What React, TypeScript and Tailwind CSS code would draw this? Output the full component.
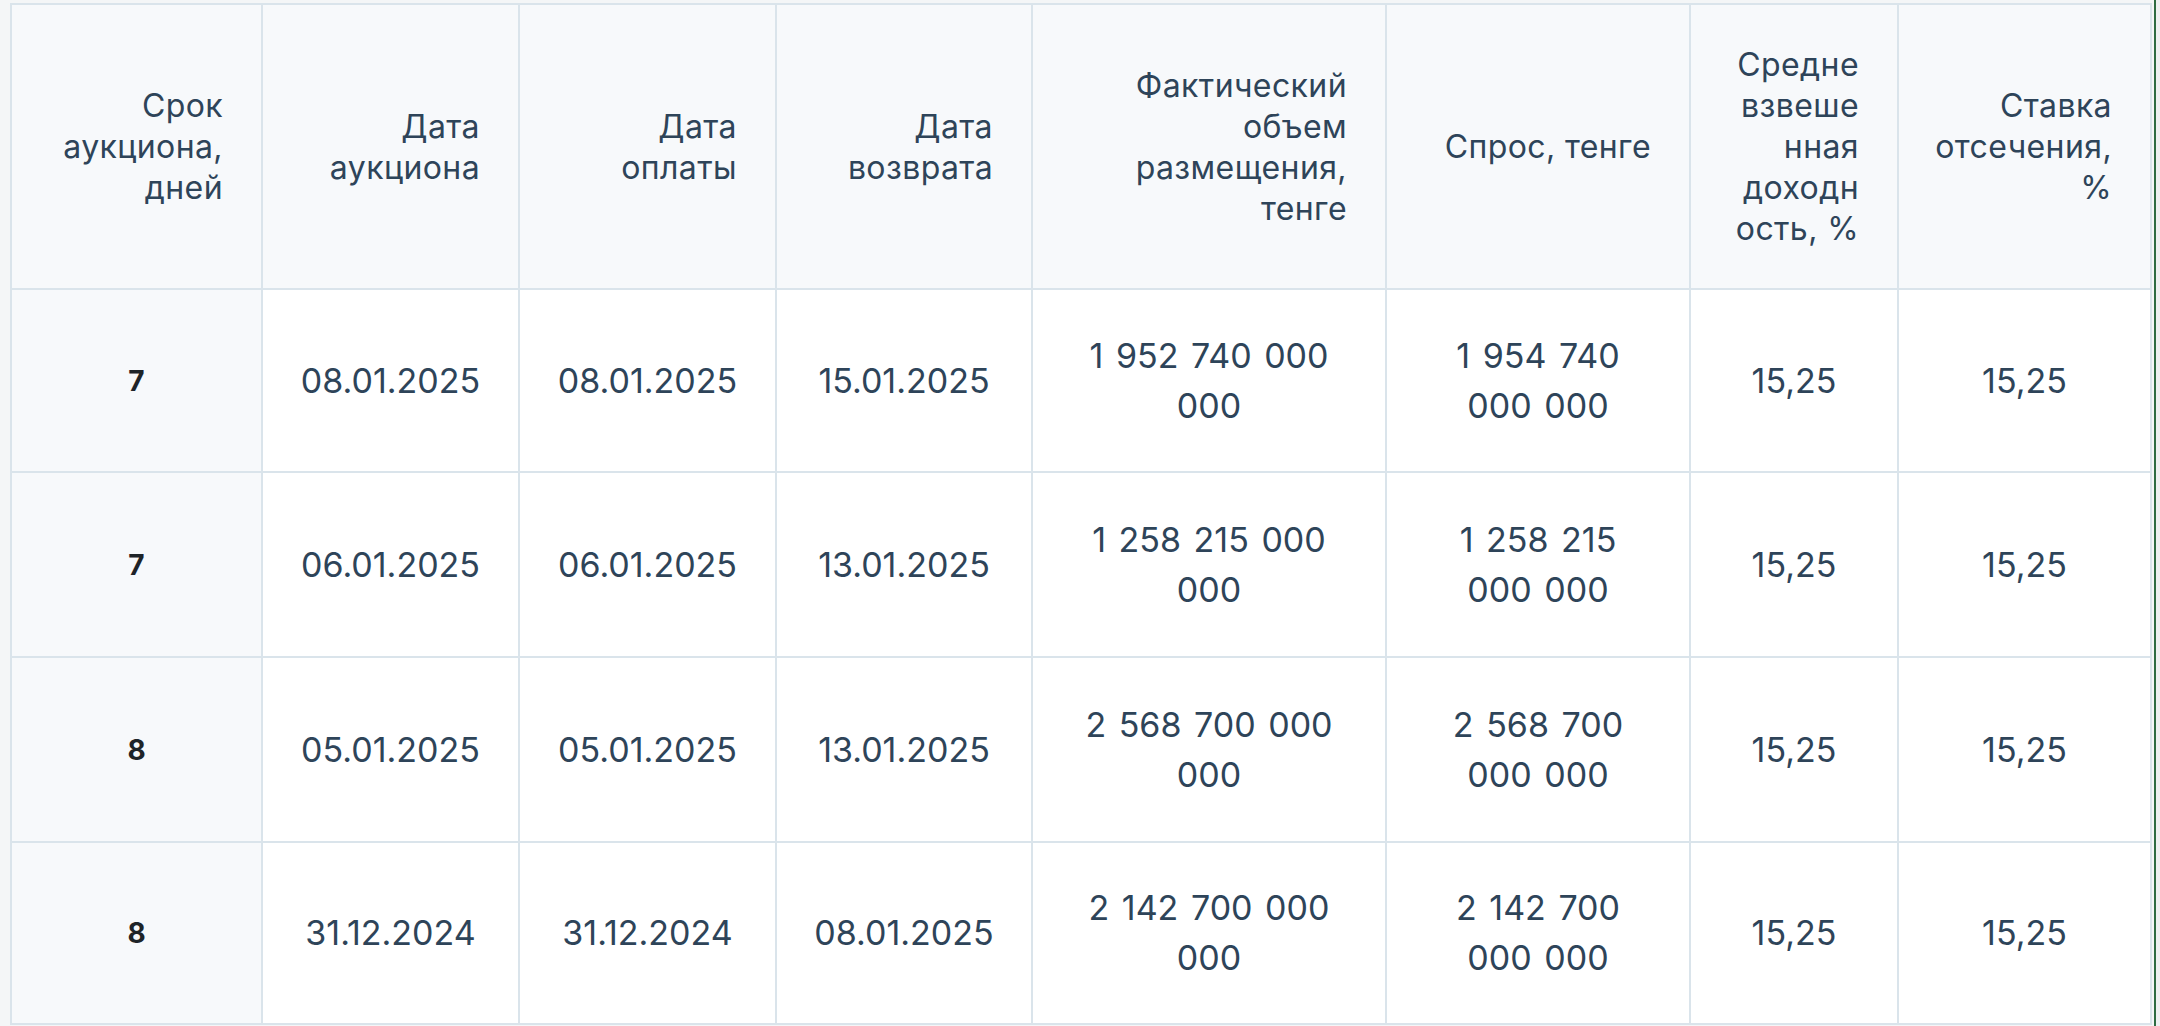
import React from "react";

const headers: string[][] = [
  ["Срок", "аукциона,", "дней"],
  ["Дата", "аукциона"],
  ["Дата", "оплаты"],
  ["Дата", "возврата"],
  ["Фактический", "объем", "размещения,", "тенге"],
  ["Спрос, тенге"],
  ["Средне", "взвеше", "нная", "доходн", "ость, %"],
  ["Ставка", "отсечения,", "%"],
];

const widths = [251, 257, 257, 256, 354, 304, 208, 253];

type Row = { term: string; a: string; p: string; r: string; vol: string[]; dem: string[]; avg: string; cut: string };

const rows: Row[] = [
  { term: "7", a: "08.01.2025", p: "08.01.2025", r: "15.01.2025", vol: ["1 952 740 000", "000"], dem: ["1 954 740", "000 000"], avg: "15,25", cut: "15,25" },
  { term: "7", a: "06.01.2025", p: "06.01.2025", r: "13.01.2025", vol: ["1 258 215 000", "000"], dem: ["1 258 215", "000 000"], avg: "15,25", cut: "15,25" },
  { term: "8", a: "05.01.2025", p: "05.01.2025", r: "13.01.2025", vol: ["2 568 700 000", "000"], dem: ["2 568 700", "000 000"], avg: "15,25", cut: "15,25" },
  { term: "8", a: "31.12.2024", p: "31.12.2024", r: "08.01.2025", vol: ["2 142 700 000", "000"], dem: ["2 142 700", "000 000"], avg: "15,25", cut: "15,25" },
];

const rowHeights = [183, 185, 185, 182];

function Lines({ lines }: { lines: string[] }) {
  return (
    <>
      {lines.map((l, i) => (
        <span key={i} className="block whitespace-nowrap">
          {l}
        </span>
      ))}
    </>
  );
}

export default function App() {
  const cell = "border-2 border-[#dae4eb] align-middle";
  const body = `${cell} text-center text-[34px] leading-[50px] text-[#2e4459]`;
  return (
    <div
      className="w-[2160px] h-[1026px] bg-[#f4f6f7] flex overflow-hidden"
      style={{ fontFamily: "Inter, 'Noto Sans', sans-serif" }}
    >
      <div className="pl-[10px] pt-[3px]">
        <table className="table-fixed border-collapse w-[2140px] bg-white">
          <colgroup>
            {widths.map((w, i) => (
              <col key={i} style={{ width: w }} />
            ))}
          </colgroup>
          <thead>
            <tr className="h-[285px]">
              {headers.map((h, i) => (
                <th
                  key={i}
                  className={`${cell} bg-[#f7f9fb] text-right font-normal text-[32px] tracking-[0.4px] leading-[41px] text-[#2e4459] pr-[38px] pl-[8px]`}
                >
                  <Lines lines={h} />
                </th>
              ))}
            </tr>
          </thead>
          <tbody>
            {rows.map((r, i) => (
              <tr key={i} style={{ height: rowHeights[i] }}>
                <td className={`${cell} bg-[#f7f9fb] text-center text-[28px] font-bold text-[#1e2428]`}>
                  {r.term}
                </td>
                <td className={body}>{r.a}</td>
                <td className={body}>{r.p}</td>
                <td className={body}>{r.r}</td>
                <td className={`${body} [word-spacing:3px]`}>
                  <Lines lines={r.vol} />
                </td>
                <td className={`${body} [word-spacing:3px]`}>
                  <Lines lines={r.dem} />
                </td>
                <td className={body}>{r.avg}</td>
                <td className={body}>{r.cut}</td>
              </tr>
            ))}
          </tbody>
        </table>
      </div>
      <div className="ml-[2px] w-[2px] h-full bg-[#2f6b42]" />
      <div className="flex-1 bg-[#eef0f1]" />
    </div>
  );
}
